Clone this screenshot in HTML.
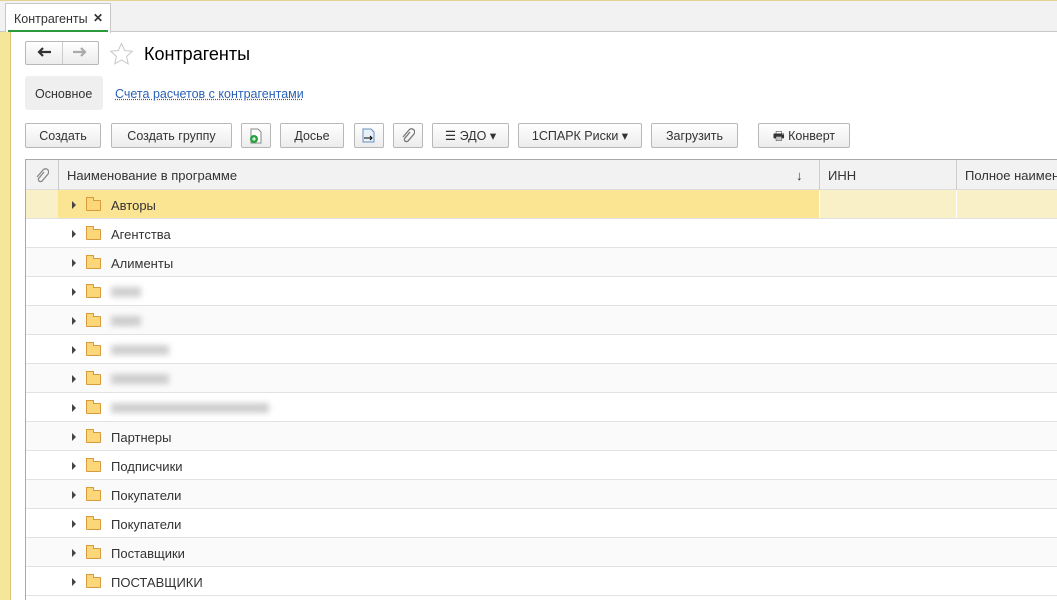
<!DOCTYPE html>
<html><head><meta charset="utf-8"><style>
*{margin:0;padding:0;box-sizing:border-box}
body{width:1057px;height:600px;overflow:hidden;background:#fff;font-family:"Liberation Sans",Arial,sans-serif;font-size:13px;color:#333;position:relative}
.strip{position:absolute;left:0;top:32px;width:11px;height:568px;background:#f5e69b;border-right:1px solid #d8c878}
.tabbar{position:absolute;left:0;top:0;width:1057px;height:32px;background:#f2f2f2;border-bottom:1px solid #c8c8c8;border-top:1px solid #e0d490}
.tab{position:absolute;left:5px;top:2px;width:106px;height:30px;background:#fff;border:1px solid #c8c8c8;border-bottom:none;font-size:12.5px;padding:8px 0 0 8px}
.tab:after{content:"";position:absolute;left:2px;right:2px;bottom:1px;height:2px;background:#2a9a3a}
.tab b{position:absolute;right:7px;top:7px;font-size:12px}
.btn{position:absolute;height:25px;border:1px solid #b8b8b8;border-radius:2px;background:linear-gradient(#fff,#ececec);font-size:12.5px;color:#333;text-align:center;line-height:24px}
.hdr{position:absolute;left:25px;top:159px;width:1040px;height:31px;background:#f2f2f2;border-top:1px solid #aaa;border-bottom:1px solid #ddd}
.hdr span{position:absolute;top:8px;font-size:13px}
.vs{position:absolute;top:0;width:1px;height:30px;background:#ccc}
.row{position:absolute;left:25px;width:1040px;height:29px;border-bottom:1px solid #e2e2e2}
.row .t{position:absolute;left:86px;top:8px;font-size:13px}
.row .tri{position:absolute;left:47px;top:11px;width:0;height:0;border-left:4px solid #444;border-top:4px solid transparent;border-bottom:4px solid transparent}
.row .f{position:absolute;left:61px;top:10px;width:15px;height:11px;background:#fbd77a;border:1px solid #d99a3c;border-radius:1px}
.row .f:before{content:"";position:absolute;left:-1px;top:-4px;width:6px;height:3px;background:#fbd77a;border:1px solid #d99a3c;border-bottom:none}
.blur{position:absolute;left:86px;top:10px;height:10px;background:#bbb;filter:blur(3px);opacity:.7}
</style></head><body>
<div class="tabbar"><div class="tab">Контрагенты<b>✕</b></div></div>
<div class="strip"></div>
<div class="btn" style="left:25px;top:41px;width:74px;height:24px"></div>
<div style="position:absolute;left:62px;top:42px;width:1px;height:22px;background:#ccc"></div>
<svg style="position:absolute;left:36px;top:46px" width="16" height="12"><path d="M15 6H4M7 2L3 6l4 4" stroke="#333" stroke-width="2.2" fill="none"/></svg>
<svg style="position:absolute;left:72px;top:46px" width="16" height="12"><path d="M1 6h11M9 2l4 4-4 4" stroke="#aaa" stroke-width="2.2" fill="none"/></svg>
<svg style="position:absolute;left:109px;top:42px" width="25" height="24"><path d="M12.5 1.5l3.2 7 7.6.8-5.7 5.1 1.6 7.5-6.7-3.9-6.7 3.9 1.6-7.5L1.7 9.3l7.6-.8z" fill="none" stroke="#c8c8c8"/></svg>
<div style="position:absolute;left:144px;top:44px;font-size:18px;color:#000">Контрагенты</div>
<div style="position:absolute;left:25px;top:76px;width:78px;height:34px;background:#efefef;border-radius:3px;font-size:12.5px;padding:11px 0 0 10px">Основное</div>
<div style="position:absolute;left:115px;top:87px;font-size:12.5px;color:#2a62b8;text-decoration:underline dotted">Счета расчетов с контрагентами</div>
<div class="btn" style="left:25px;top:123px;width:76px">Создать</div>
<div class="btn" style="left:111px;top:123px;width:121px">Создать группу</div>
<div class="btn" style="left:241px;top:123px;width:30px"><svg width="14" height="16" style="margin-top:4px"><path d="M2 1h7l3 3v11H2z" fill="#fff" stroke="#888"/><circle cx="5" cy="11" r="4" fill="#2aa040"/><path d="M3 11h4M5 9v4" stroke="#fff"/></svg></div>
<div class="btn" style="left:280px;top:123px;width:64px">Досье</div>
<div class="btn" style="left:354px;top:123px;width:30px"><svg width="16" height="16" style="margin-top:4px"><path d="M2 1h8l3 3v10H2z" fill="#e8f0f8" stroke="#6690c0"/><path d="M3 10h8M9 8l2 2-2 2" stroke="#000" fill="none"/></svg></div>
<div class="btn" style="left:393px;top:123px;width:30px"><svg width="14" height="16" style="margin-top:4px"><path d="M9 4L4 10a2 2 0 003 3l6-7a3 3 0 00-5-4L2 9" stroke="#777" stroke-width="1.3" fill="none"/></svg></div>
<div class="btn" style="left:432px;top:123px;width:77px">☰ ЭДО ▾</div>
<div class="btn" style="left:518px;top:123px;width:124px">1СПАРК Риски ▾</div>
<div class="btn" style="left:651px;top:123px;width:87px">Загрузить</div>
<div class="btn" style="left:758px;top:123px;width:92px">🖶 Конверт</div>
<div class="hdr"><svg style="position:absolute;left:10px;top:8px" width="14" height="16"><path d="M9 4L4 10a2 2 0 003 3l6-7a3 3 0 00-5-4L2 9" stroke="#888" stroke-width="1.3" fill="none"/></svg><div class="vs" style="left:33px"></div><span style="left:42px">Наименование в программе</span><span style="left:771px">↓</span><div class="vs" style="left:794px"></div><span style="left:803px">ИНН</span><div class="vs" style="left:931px"></div><span style="left:940px">Полное наимен</span></div>

<div class="row" style="top:190px;background:#faf0c8"><div style="position:absolute;left:33px;top:0;width:761px;height:28px;background:#fbe593"></div><div style="position:absolute;left:794px;top:0;width:1px;height:28px;background:#fff"></div><div style="position:absolute;left:931px;top:0;width:1px;height:28px;background:#fff"></div><div class="tri"></div><div class="f"></div><div class="t">Авторы</div></div>
<div class="row" style="top:219px"><div class="tri"></div><div class="f"></div><div class="t">Агентства</div></div>
<div class="row" style="top:248px;background:#fafafa"><div class="tri"></div><div class="f"></div><div class="t">Алименты</div></div>
<div class="row" style="top:277px"><div class="tri"></div><div class="f"></div><div class="blur" style="width:30px"></div></div>
<div class="row" style="top:306px;background:#fafafa"><div class="tri"></div><div class="f"></div><div class="blur" style="width:30px"></div></div>
<div class="row" style="top:335px"><div class="tri"></div><div class="f"></div><div class="blur" style="width:58px"></div></div>
<div class="row" style="top:364px;background:#fafafa"><div class="tri"></div><div class="f"></div><div class="blur" style="width:58px"></div></div>
<div class="row" style="top:393px"><div class="tri"></div><div class="f"></div><div class="blur" style="width:158px"></div></div>
<div class="row" style="top:422px;background:#fafafa"><div class="tri"></div><div class="f"></div><div class="t">Партнеры</div></div>
<div class="row" style="top:451px"><div class="tri"></div><div class="f"></div><div class="t">Подписчики</div></div>
<div class="row" style="top:480px;background:#fafafa"><div class="tri"></div><div class="f"></div><div class="t">Покупатели</div></div>
<div class="row" style="top:509px"><div class="tri"></div><div class="f"></div><div class="t">Покупатели</div></div>
<div class="row" style="top:538px;background:#fafafa"><div class="tri"></div><div class="f"></div><div class="t">Поставщики</div></div>
<div class="row" style="top:567px"><div class="tri"></div><div class="f"></div><div class="t">ПОСТАВЩИКИ</div></div>
<div style="position:absolute;left:25px;top:159px;width:1px;height:441px;background:#aaa;z-index:5"></div>
</body></html>
